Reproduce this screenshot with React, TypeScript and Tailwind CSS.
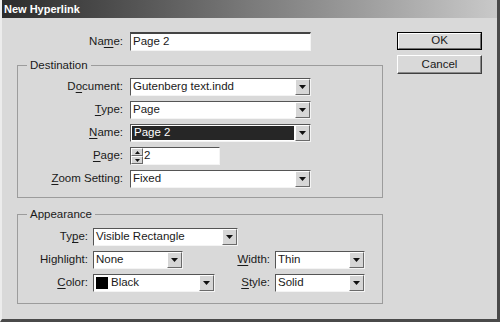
import * as React from 'react';

const font = "font-['Liberation_Sans',Arial,sans-serif]";

function Tri({ up }: { up?: boolean }) {
  return (
    <svg width="7" height="4" viewBox="0 0 7 4">
      <polygon points={up ? '0,4 7,4 3.5,0' : '0,0 7,0 3.5,4'} fill="#111" />
    </svg>
  );
}

function Select({ w, dark, children }: { w: string; dark?: boolean; children: React.ReactNode }) {
  return (
    <div className={`flex h-[18px] border border-t-[#555] border-l-[#555] border-r-[#f4f4f4] border-b-[#f4f4f4] bg-white ${w}`}>
      <div className={`flex-1 flex items-center text-[11.5px] leading-none pl-[2px] ${dark ? 'bg-[#262626] text-white m-[1px]' : 'text-[#1a1a1a]'}`}>
        {children}
      </div>
      <div className="w-[15px] flex items-center justify-center bg-[#d6d6d6] border border-t-white border-l-white border-r-[#6a6a6a] border-b-[#6a6a6a]">
        <Tri />
      </div>
    </div>
  );
}

function Row({ label, labelW, children }: { label: React.ReactNode; labelW: string; children: React.ReactNode }) {
  return (
    <div className="flex items-center">
      <div className={`text-right text-[11.5px] leading-none text-[#1a1a1a] ${labelW}`}>{label}</div>
      {children}
    </div>
  );
}

function U({ children }: { children: React.ReactNode }) {
  return <span className="underline underline-offset-[2px]">{children}</span>;
}

export default function App() {
  return (
    <div className={`w-[500px] h-[322px] bg-[#d9d9d9] border-l-[2px] border-l-[#ececec] border-r-[3px] border-b-[3px] border-r-[#4a4a4a] border-b-[#4a4a4a] flex flex-col ${font}`}>
      {/* Title bar */}
      <div className="h-[18px] flex items-center pl-[2px] bg-gradient-to-r from-[#2c2c2c] via-[#7a7a7a] to-[#c9c9c9]">
        <span className="text-white font-bold text-[11px] leading-none">New Hyperlink</span>
      </div>

      <div className="flex items-start pt-[14px]">
        {/* Left column */}
        <div className="w-[381px] pl-[15px] flex flex-col">
          <Row label={<>Na<U>m</U>e:</>} labelW="w-[113px] pr-[7px]">
            <div className="w-[181px] h-[19px] bg-white border-t-2 border-l border-t-[#444] border-l-[#555] border-r border-b border-r-[#f4f4f4] border-b-[#f4f4f4] flex items-center pl-[2px] text-[11.5px] leading-none text-[#1a1a1a]">
              Page 2
            </div>
          </Row>

          <fieldset className="mt-[7px] border border-[#9c9c9c] pt-[6px] pb-[9px] flex flex-col gap-[5px]">
            <legend className="ml-[9px] px-[3px] text-[11.5px] leading-[14px] text-[#1a1a1a]">Destination</legend>
            <Row label={<>D<U>o</U>cument:</>} labelW="w-[112px] pr-[7px]">
              <Select w="w-[181px]">Gutenberg text.indd</Select>
            </Row>
            <Row label={<><U>T</U>ype:</>} labelW="w-[112px] pr-[7px]">
              <Select w="w-[181px]">Page</Select>
            </Row>
            <Row label={<><U>N</U>ame:</>} labelW="w-[112px] pr-[7px]">
              <Select w="w-[181px]" dark>Page 2</Select>
            </Row>
            <Row label={<><U>P</U>age:</>} labelW="w-[112px] pr-[7px]">
              <div className="w-[90px] h-[18px] flex bg-white border border-t-[#555] border-l-[#555] border-r-[#f4f4f4] border-b-[#f4f4f4]">
                <div className="w-[12px] flex flex-col">
                  <div className="flex-1 flex items-center justify-center bg-[#d6d6d6] border border-t-white border-l-white border-r-[#6a6a6a] border-b-[#6a6a6a]">
                    <svg width="5" height="3" viewBox="0 0 5 3"><polygon points="0,3 5,3 2.5,0" fill="#111" /></svg>
                  </div>
                  <div className="flex-1 flex items-center justify-center bg-[#d6d6d6] border border-t-white border-l-white border-r-[#6a6a6a] border-b-[#6a6a6a]">
                    <svg width="5" height="3" viewBox="0 0 5 3"><polygon points="0,0 5,0 2.5,3" fill="#111" /></svg>
                  </div>
                </div>
                <div className="flex items-center pl-[1px] text-[11.5px] leading-none text-[#1a1a1a]">2</div>
              </div>
            </Row>
            <Row label={<><U>Z</U>oom Setting:</>} labelW="w-[112px] pr-[7px]">
              <Select w="w-[181px]">Fixed</Select>
            </Row>
          </fieldset>

          <fieldset className="mt-[9px] border border-[#9c9c9c] pt-[7px] pb-[11px] flex flex-col gap-[5px]">
            <legend className="ml-[9px] px-[3px] text-[11.5px] leading-[14px] text-[#1a1a1a]">Appearance</legend>
            <Row label={<>Ty<U>p</U>e:</>} labelW="w-[75px] pr-[5px]">
              <Select w="w-[145px]">Visible Rectangle</Select>
            </Row>
            <Row label="Highlight:" labelW="w-[75px] pr-[5px]">
              <Select w="w-[90px]">None</Select>
              <div className="w-[92px] pr-[5px] text-right text-[11.5px] leading-none text-[#1a1a1a]"><U>W</U>idth:</div>
              <Select w="w-[90px]">Thin</Select>
            </Row>
            <Row label={<><U>C</U>olor:</>} labelW="w-[75px] pr-[5px]">
              <Select w="w-[122px]">
                <span className="w-[12px] h-[12px] bg-black mr-[3px]" />
                Black
              </Select>
              <div className="w-[60px] pr-[5px] text-right text-[11.5px] leading-none text-[#1a1a1a]"><U>S</U>tyle:</div>
              <Select w="w-[90px]">Solid</Select>
            </Row>
          </fieldset>
        </div>

        {/* Buttons */}
        <div className="ml-[14px] flex flex-col gap-[5px]">
          <div className="w-[85px] h-[18px] border border-black flex">
            <div className="flex-1 flex items-center justify-center border border-t-white border-l-white border-r-[#707070] border-b-[#707070] text-[11.5px] leading-none text-[#1a1a1a]">
              OK
            </div>
          </div>
          <div className="w-[85px] h-[19px] flex items-center justify-center border border-t-white border-l-white border-r-[#404040] border-b-[#404040] shadow-[inset_-1px_-1px_0_#8a8a8a] text-[11.5px] leading-none text-[#1a1a1a]">
            Cancel
          </div>
        </div>
      </div>
    </div>
  );
}
